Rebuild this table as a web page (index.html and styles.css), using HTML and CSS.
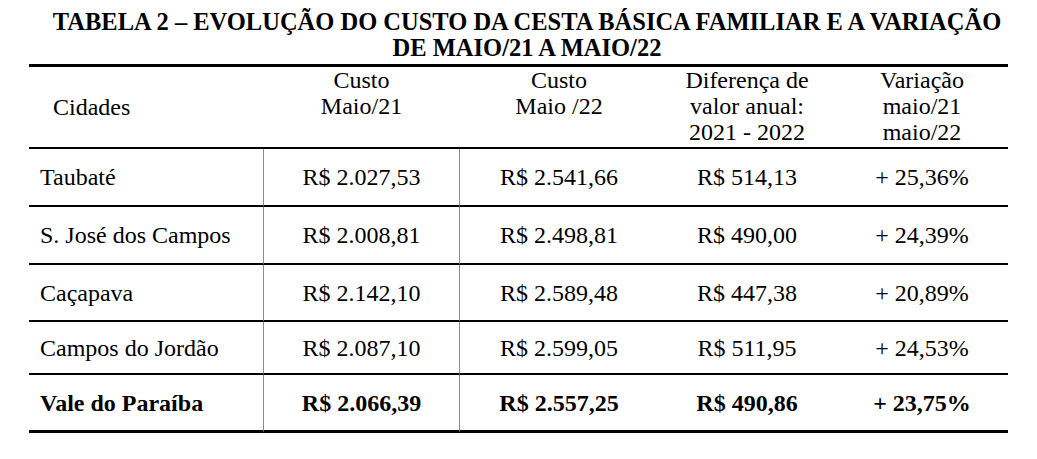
FILE: index.html
```html
<!DOCTYPE html>
<html lang="pt-BR">
<head>
<meta charset="utf-8">
<title>Tabela 2</title>
<link rel="stylesheet" href="styles.css">
</head>
<body>
<div class="page">
  <h1 class="title">TABELA 2 – EVOLUÇÃO DO CUSTO DA CESTA BÁSICA FAMILIAR E A VARIAÇÃO DE MAIO/21 A MAIO/22</h1>
  <table class="data">
    <colgroup>
      <col class="c1"><col class="c2"><col class="c3"><col class="c4"><col class="c5">
    </colgroup>
    <thead>
      <tr>
        <th class="h-city">Cidades</th>
        <th>Custo<br>Maio/21</th>
        <th>Custo<br>Maio /22</th>
        <th>Diferença de<br>valor anual:<br>2021 - 2022</th>
        <th>Variação<br>maio/21<br>maio/22</th>
      </tr>
    </thead>
    <tbody>
      <tr class="r1">
        <td class="city">Taubaté</td><td class="sep">R$ 2.027,53</td><td>R$ 2.541,66</td><td>R$ 514,13</td><td>+ 25,36%</td>
      </tr>
      <tr class="r2">
        <td class="city">S. José dos Campos</td><td class="sep">R$ 2.008,81</td><td>R$ 2.498,81</td><td>R$ 490,00</td><td>+ 24,39%</td>
      </tr>
      <tr class="r3">
        <td class="city">Caçapava</td><td class="sep">R$ 2.142,10</td><td>R$ 2.589,48</td><td>R$ 447,38</td><td>+ 20,89%</td>
      </tr>
      <tr class="r4">
        <td class="city">Campos do Jordão</td><td class="sep">R$ 2.087,10</td><td>R$ 2.599,05</td><td>R$ 511,95</td><td>+ 24,53%</td>
      </tr>
      <tr class="r5 total">
        <td class="city">Vale do Paraíba</td><td class="sep">R$ 2.066,39</td><td>R$ 2.557,25</td><td>R$ 490,86</td><td>+ 23,75%</td>
      </tr>
    </tbody>
  </table>
</div>
</body>
</html>
```

FILE: styles.css
```css
html, body {
  margin: 0;
  padding: 0;
  background: #ffffff;
}

body {
  font-family: "Liberation Serif", "Times New Roman", serif;
  color: #000000;
  font-size: 24px;
  line-height: 26px;
}

.page {
  padding: 9px 29px 0 29px;
}

.title {
  margin: 0 0 0 17px;
  font-size: 24.5px;
  line-height: 26px;
  font-weight: bold;
  text-align: center;
}

.data {
  margin-top: 3px;
  width: 979px;
  table-layout: fixed;
  border-collapse: separate;
  border-spacing: 0;
  border-top: 3px solid #000;
}

.c1 { width: 234px; }
.c2 { width: 197px; }
.c3 { width: 198px; }
.c4 { width: 178px; }
.c5 { width: 172px; }

.data th {
  font-weight: normal;
  vertical-align: top;
  text-align: center;
  padding: 0;
  height: 82px;
  box-sizing: border-box;
  border-bottom: 2px solid #000;
  white-space: nowrap;
}

.data th.h-city {
  text-align: left;
  vertical-align: middle;
  padding-left: 24px;
}

.data td {
  padding: 0;
  text-align: center;
  vertical-align: middle;
  border-bottom: 2px solid #000;
  white-space: nowrap;
}

.data td.city {
  text-align: left;
  padding-left: 11px;
}

.data td.sep {
  border-left: 1px solid #8c8c8c;
  border-right: 1px solid #8c8c8c;
}

.r1 td { height: 56px; }
.r2 td { height: 56px; }
.r3 td { height: 55px; }
.r4 td { height: 51px; }
.r5 td { height: 55px; border-bottom-width: 3px; }

.total td {
  font-weight: bold;
}
```
